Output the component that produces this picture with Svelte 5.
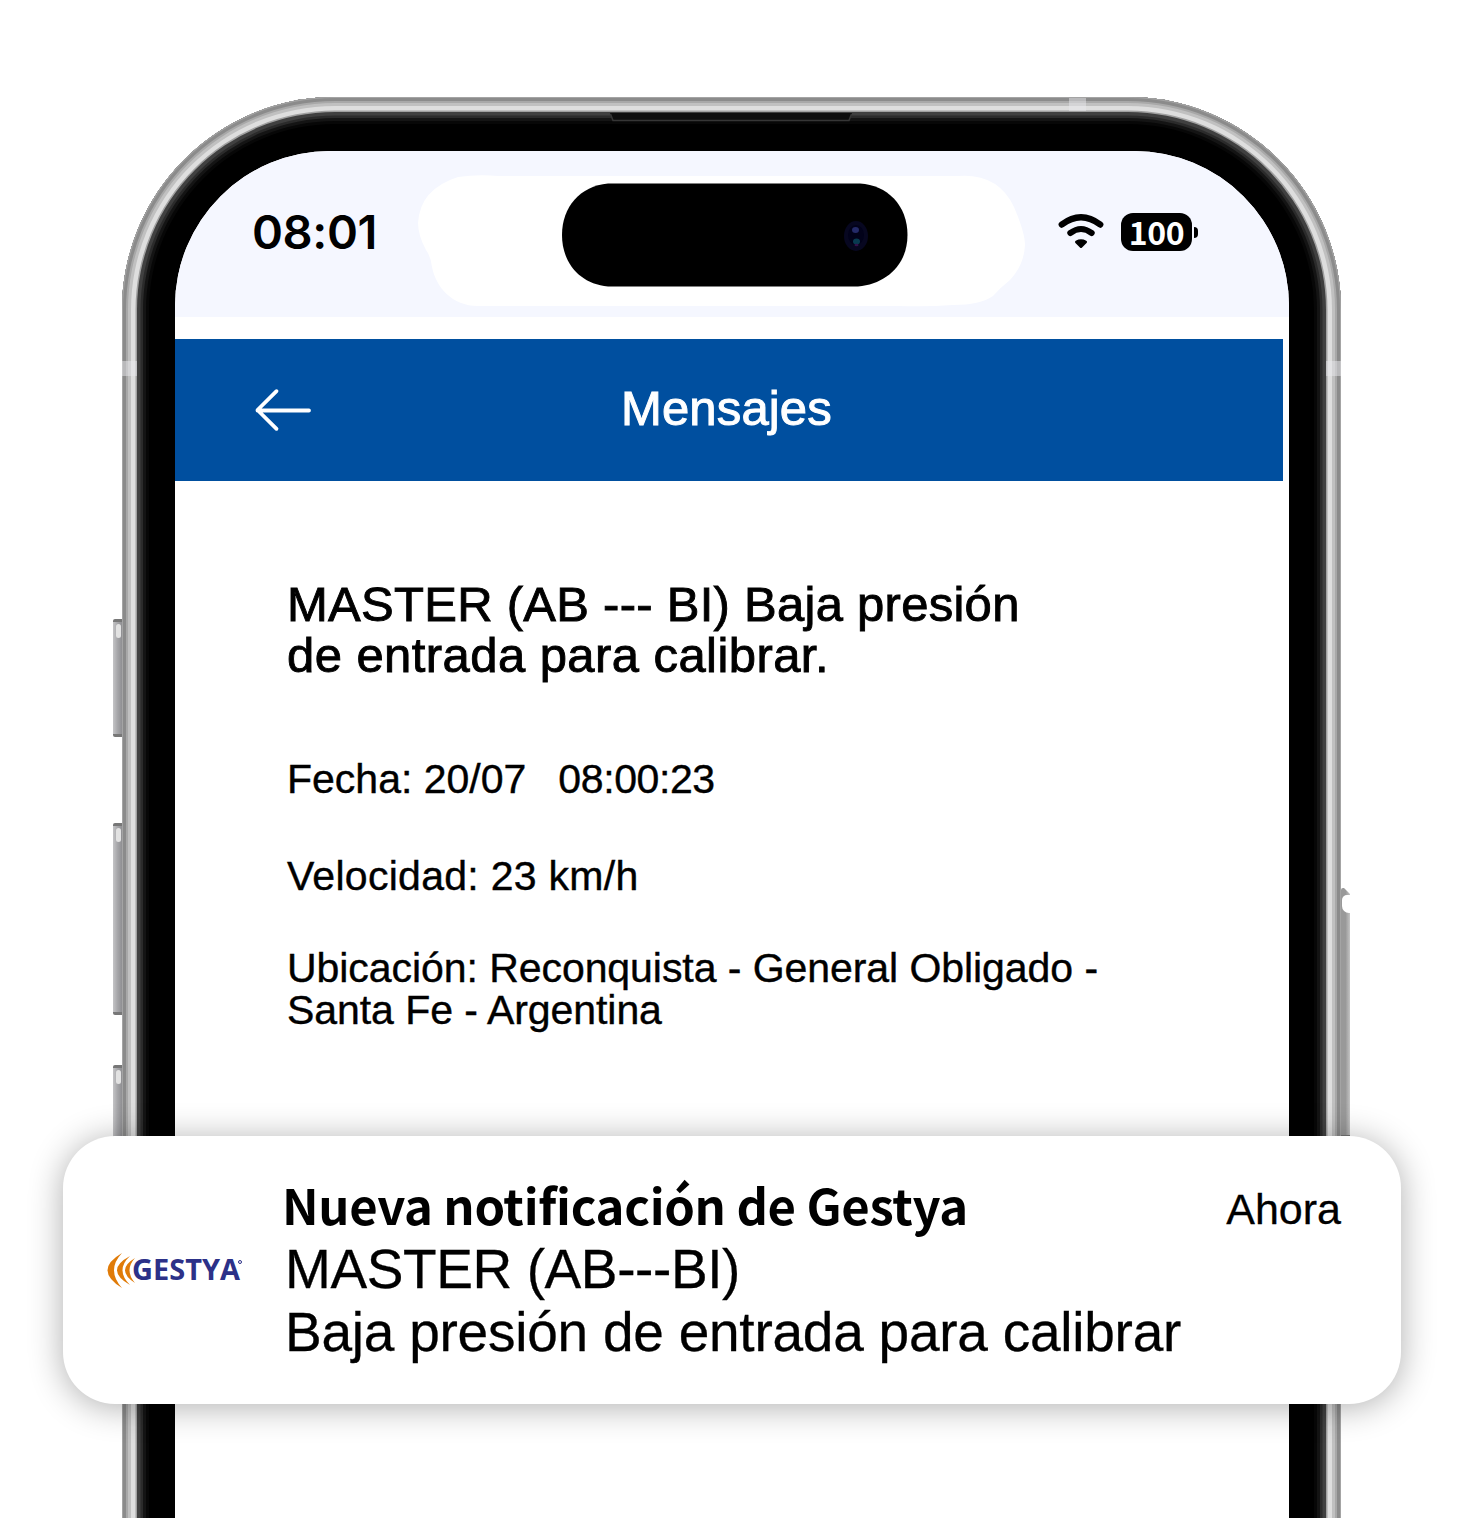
<script>
  const title = ['MASTER (AB --- BI) Baja presión', 'de entrada para calibrar.'];
  const place = ['Ubicación: Reconquista - General Obligado -', 'Santa Fe - Argentina'];
</script>

<main class="stage">
  <section class="phone">
    <i class="key k1"></i><i class="key k2"></i><i class="key k3"></i><i class="key power"></i>
    <i class="band left"></i><i class="band right"></i><i class="band top"></i>
    <i class="shade"></i>
    <svg class="speaker" viewBox="0 0 244 10"><path d="M1 1H243L240 8.500H4Z" fill="#0d0d0d" /><path d="M1.500 2L4 8.500H240L242.500 2" fill="none" stroke="#363636" stroke-width="1.500" /></svg>
    <div class="screen">
      <header class="status">
        <span class="time">08:01</span>
        <svg class="island" viewBox="0 0 610 134">
          <path fill="#fff" d="M40 2Q60 -1 80 1H540Q580 -2 596 32Q607 58 607 70Q606 90 592 105Q583 112 575 121Q562 130 535 130Q510 132 480 131H60C34 131 18 112 14 92Q13 82 8 75Q0 60 0 48Q2 14 40 2Z" />
          <path fill="#000" d="M190 8.500H442C469 10 489.500 30 489.500 60C489.500 90 468 109 440 111.500H190C162 109 144 88 144 60C144 32 162 11 190 8.500Z" />
          <ellipse cx="438" cy="61" rx="12" ry="15" fill="#070720" />
          <ellipse cx="438" cy="60" rx="8" ry="10" fill="#02021a" />
          <ellipse cx="437.500" cy="55" rx="3.500" ry="3" fill="#242a68" />
          <ellipse cx="438.500" cy="66.500" rx="3.500" ry="3" fill="#083a50" />
          <ellipse cx="438.500" cy="70" rx="2" ry="1.200" fill="#32104a" />
        </svg>
        <svg class="wifi" viewBox="0 0 46 36" fill="none" stroke="#000" stroke-width="6.400" stroke-linecap="round">
          <path d="M3.800 11.500Q23 -3 42.200 11.500" />
          <path d="M12.300 20Q23 12 33.700 20" stroke-width="6" />
          <path d="M18.500 29Q23 26.500 27.500 29L23 33.500Z" fill="#000" stroke-width="3" stroke-linejoin="round" />
        </svg>
        <span class="battery">100</span><i class="nub"></i>
      </header>
      <nav class="bar">
        <svg class="back" viewBox="0 0 58 44" fill="none" stroke="#fff" stroke-width="3.800" stroke-linecap="round" stroke-linejoin="round"><path d="M22.500 3.200L3.500 22L22.500 40.800M3.500 22.500H55" /></svg>
        <h1><span>Mensajes</span></h1>
      </nav>
      <article class="message">
        <h2>{#each title as line, i}<span class={i ? 't1' : 't0'}>{line}</span>{/each}</h2>
        <p class="date"><span>Fecha: 20/07</span><span class="clock">08:00:23</span></p>
        <p class="speed"><span>Velocidad: 23 km/h</span></p>
        <p class="place">{#each place as line}<span>{line}</span>{/each}</p>
      </article>
    </div>
  </section>

  <aside class="notice">
    <svg class="logo" viewBox="0 0 150 36">
      <g fill="#e07b08">
        <path d="M15 0Q-14 17 15 35Q-1 17 15 0Z" />
        <path d="M23 3Q-3 17 23 32Q8 17 23 3Z" />
        <path d="M28 5Q8 17 28 30Q17 17 28 5Z" />
      </g>
      <text x="25" y="27" textLength="108" lengthAdjust="spacingAndGlyphs">GESTYA</text>
      <circle cx="133" cy="9" r="1.500" fill="none" stroke="#2c3188" stroke-width="1" />
    </svg>
    <div class="copy">
      <div class="head"><strong>Nueva notificación de Gestya</strong><time>Ahora</time></div>
      <span class="n0">MASTER (AB---BI)</span>
      <span class="n1">Baja presión de entrada para calibrar</span>
    </div>
  </aside>
</main>

<style>
  :global(body) { background: #fff; }
  .stage {
    position: relative;
    box-sizing: border-box;
    width: 1471px;
    height: 1518px;
    padding: 97px 130px 0 122px;
    overflow: hidden;
    background: #fff;
    color: #000;
    font-family: "Liberation Sans", Arial, sans-serif;
  }
  .phone {
    position: relative;
    box-sizing: border-box;
    height: 1700px;
    padding: 54px 52px 0 53px;
    border-radius: 213px;
    background: #000;
  }
  /* concentric rings of the metal frame */
  .shade {
    position: absolute;
    inset: 0;
    border-radius: 213px;
    box-shadow:
      inset 0 0 0 1px #a4a4a4,
      inset 0 0 0 4px #8b8b8b,
      inset 0 0 0 6px #a8a8a8,
      inset 0 0 0 9px #c0c0c0,
      inset 0 0 0 13.500px #dedede,
      inset 0 0 0 15px #a0a0a0,
      inset 0 0 0 18.500px #404040,
      inset 0 0 0 21px #2b2b2b,
      inset 0 0 0 24px #141414,
      inset 0 0 0 27px #070707;
  }
  .band { position: absolute; z-index: 1; background: rgba(232, 232, 236, .5); }
  .left { left: 0; top: 264px; width: 15px; height: 15px; }
  .right { right: 0; top: 264px; width: 15px; height: 15px; }
  .top { left: 947px; top: 1px; width: 17px; height: 13px; }
  .key {
    position: absolute;
    left: -9px;
    width: 9px;
    box-sizing: border-box;
    border-top: 3px solid #777;
    border-bottom: 3px solid #777;
    border-radius: 2px 0 0 2px;
    background: linear-gradient(90deg, #c4c4c6, #a6a6a9 50%, #8f8f92);
  }
  .key::before { content: ""; display: block; width: 5px; height: 14px; margin: 2px 0 0 3px; border-radius: 3px; background: #e2e2e2; }
  .k1 { top: 522px; height: 118px; }
  .k2 { top: 726px; height: 192px; }
  .k3 { top: 968px; height: 192px; }
  .power {
    left: 1219px;
    top: 791px;
    height: 250px;
    border-top: 0;
    background: linear-gradient(90deg, #999 50%, #c4c4c4);
    clip-path: polygon(0 0, 3px 0, 9px 6px, 9px 100%, 0 100%);
  }
  .power::before { width: 9px; height: 18px; margin: 7px 0 0 1px; border-radius: 5px 0 0 7px; background: #fff; }
  .speaker { position: absolute; left: 487px; top: 15px; width: 244px; height: 10px; }
  .screen {
    position: relative;
    height: 1600px;
    border-radius: 155px 155px 0 0;
    background: #fff;
    overflow: hidden;
  }
  .status { display: flex; align-items: flex-start; height: 166px; background: #f5f7ff; }
  .time {
    width: 165px;
    margin: 52px 0 0 77px;
    font: 600 47px/57px Inter, sans-serif;
    letter-spacing: -.4px;
    white-space: nowrap;
  }
  .island { width: 610px; height: 134px; margin-top: 24px; flex: none; margin-left: 1px; }
  .wifi { width: 46px; height: 36px; margin: 62px 0 0 30px; flex: none; }
  .battery {
    width: 71px;
    height: 38px;
    margin: 62px 0 0 17px;
    border-radius: 12px;
    background: #000;
    color: #fff;
    font: 700 32px/36px "Noto Sans CJK JP", sans-serif;
    letter-spacing: -.4px;
    text-align: center;
    flex: none;
  }
  .nub { width: 4px; height: 11px; margin: 76px 0 0 2px; border-radius: 0 5px 5px 0; background: #000; }
  .bar {
    display: flex;
    align-items: center;
    width: 1108px;
    height: 142px;
    margin-top: 22px;
    background: #004f9f;
    color: #fff;
  }
  .back { width: 58px; height: 44px; margin-left: 79px; }
  h1, h2, p { margin: 0; font-weight: 400; white-space: nowrap; }
  h1 { margin: 0 0 4px 309px; font-size: 49px; line-height: 56px; letter-spacing: .15px; -webkit-text-stroke: 1px #fff; }
  .message { padding: 98px 0 0 112px; }
  .message span, .n0, .n1 { display: block; }
  h2 { font-size: 49px; line-height: 51px; -webkit-text-stroke: .9px #000; }
  .t0 { letter-spacing: .27px; }
  .t1 { letter-spacing: .43px; }
  p { font-size: 41px; line-height: 42px; -webkit-text-stroke: .4px #000; }
  .date { display: flex; gap: 32px; margin-top: 77px; }
  .clock { letter-spacing: -.4px; }
  .speed { margin-top: 55px; letter-spacing: .28px; }
  .place { margin-top: 50px; letter-spacing: -.06px; }
  .notice {
    position: absolute;
    left: 63px;
    top: 1136px;
    box-sizing: border-box;
    display: flex;
    width: 1338px;
    height: 268px;
    padding: 40px 60px 0 44px;
    border-radius: 52px;
    background: #fff;
    box-shadow: 0 3px 34px rgba(0, 0, 0, .32);
    z-index: 3;
  }
  .logo { width: 150px; height: 36px; margin-top: 77px; flex: none; }
  .logo text { font: 700 28px "Open Sans", sans-serif; fill: #2c3188; }
  .copy { flex: 1; margin-left: 28px; white-space: nowrap; }
  .head { display: flex; justify-content: space-between; height: 62px; margin-left: -3px; }
  strong { font: 700 49px/62px "Noto Sans CJK JP", sans-serif; letter-spacing: -.34px; margin-top: -3px; }
  time { font-size: 43px; line-height: 66px; -webkit-text-stroke: .3px #000; }
  .n0, .n1 { font-size: 55px; line-height: 63px; -webkit-text-stroke: .3px #000; }
  .n0 { letter-spacing: -.4px; }
  .n1 { letter-spacing: -.24px; }
</style>
